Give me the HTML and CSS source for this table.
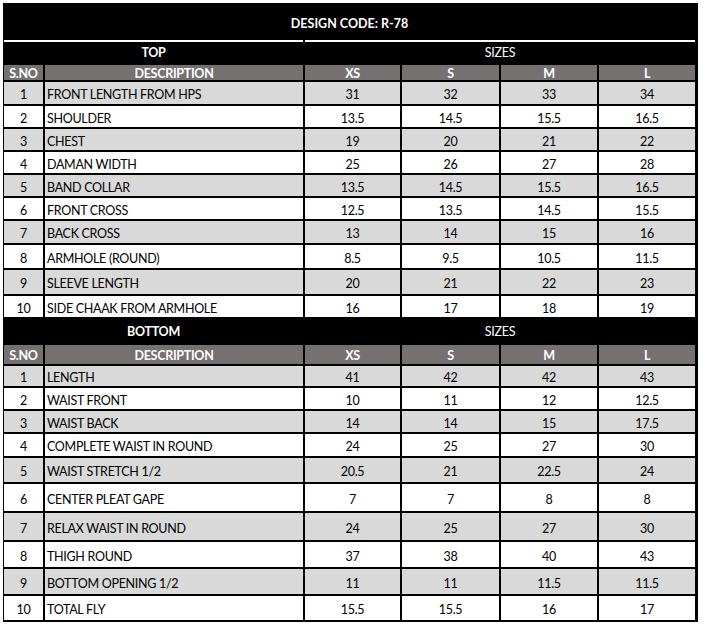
FILE: index.html
```html
<!DOCTYPE html>
<html>
<head>
<meta charset="utf-8">
<link rel="stylesheet" href="styles.css">
</head>
<body>
<div class="sheet">
  <div class="title">DESIGN CODE: R-78</div>

  <div class="row sec top"><div class="name">TOP</div><div class="sizes">SIZES</div></div>
  <div class="row hd h15"><div>S.NO</div><div>DESCRIPTION</div><div>XS</div><div>S</div><div>M</div><div>L</div></div>
  <div class="row g h22"><div>1</div><div class="d">FRONT LENGTH FROM HPS</div><div>31</div><div>32</div><div>33</div><div>34</div></div>
  <div class="row w h21"><div>2</div><div class="d">SHOULDER</div><div>13.5</div><div>14.5</div><div>15.5</div><div>16.5</div></div>
  <div class="row g h21"><div>3</div><div class="d">CHEST</div><div>19</div><div>20</div><div>21</div><div>22</div></div>
  <div class="row w h21"><div>4</div><div class="d">DAMAN WIDTH</div><div>25</div><div>26</div><div>27</div><div>28</div></div>
  <div class="row g h21"><div>5</div><div class="d">BAND COLLAR</div><div>13.5</div><div>14.5</div><div>15.5</div><div>16.5</div></div>
  <div class="row w h21"><div>6</div><div class="d">FRONT CROSS</div><div>12.5</div><div>13.5</div><div>14.5</div><div>15.5</div></div>
  <div class="row g h22"><div>7</div><div class="d">BACK CROSS</div><div>13</div><div>14</div><div>15</div><div>16</div></div>
  <div class="row w h23"><div>8</div><div class="d">ARMHOLE (ROUND)</div><div>8.5</div><div>9.5</div><div>10.5</div><div>11.5</div></div>
  <div class="row g h24"><div>9</div><div class="d">SLEEVE LENGTH</div><div>20</div><div>21</div><div>22</div><div>23</div></div>
  <div class="row w h21"><div>10</div><div class="d">SIDE CHAAK FROM ARMHOLE</div><div>16</div><div>17</div><div>18</div><div>19</div></div>

  <div class="row sec bottom"><div class="name">BOTTOM</div><div class="sizes">SIZES</div></div>
  <div class="row hd h19"><div>S.NO</div><div>DESCRIPTION</div><div>XS</div><div>S</div><div>M</div><div>L</div></div>
  <div class="row g h20"><div>1</div><div class="d">LENGTH</div><div>41</div><div>42</div><div>42</div><div>43</div></div>
  <div class="row w h21"><div>2</div><div class="d">WAIST FRONT</div><div>10</div><div>11</div><div>12</div><div>12.5</div></div>
  <div class="row g h21"><div>3</div><div class="d">WAIST BACK</div><div>14</div><div>14</div><div>15</div><div>17.5</div></div>
  <div class="row w h22"><div>4</div><div class="d">COMPLETE WAIST IN ROUND</div><div>24</div><div>25</div><div>27</div><div>30</div></div>
  <div class="row g h24"><div>5</div><div class="d">WAIST STRETCH 1/2</div><div>20.5</div><div>21</div><div>22.5</div><div>24</div></div>
  <div class="row w h27"><div>6</div><div class="d">CENTER PLEAT GAPE</div><div>7</div><div>7</div><div>8</div><div>8</div></div>
  <div class="row g h27"><div>7</div><div class="d">RELAX WAIST IN ROUND</div><div>24</div><div>25</div><div>27</div><div>30</div></div>
  <div class="row w h25"><div>8</div><div class="d">THIGH ROUND</div><div>37</div><div>38</div><div>40</div><div>43</div></div>
  <div class="row g h25"><div>9</div><div class="d">BOTTOM OPENING 1/2</div><div>11</div><div>11</div><div>11.5</div><div>11.5</div></div>
  <div class="row w h24"><div>10</div><div class="d">TOTAL FLY</div><div>15.5</div><div>15.5</div><div>16</div><div>17</div></div>
</div>
</body>
</html>
```

FILE: styles.css
```css
html, body {
  margin: 0;
  padding: 0;
  background: #ffffff;
}

body {
  padding: 3px 0 0 3px;
  font-family: "Lato", "Liberation Sans", sans-serif;
  font-size: 12.5px;
  letter-spacing: -0.3px;
  color: #000000;
}

.sheet {
  width: 691px;
  background: #000000;
  padding: 0 3px 2px 1px;
  display: flex;
  flex-direction: column;
  gap: 2px;
}

.title {
  height: 35px;
  box-sizing: border-box;
  padding-top: 6px;
  display: flex;
  align-items: center;
  justify-content: center;
  color: #ffffff;
  font-weight: 700;
  font-size: 12.5px;
  letter-spacing: 0;
}

.row {
  display: grid;
  grid-template-columns: 39px 258px 95px 97px 96px 96px;
  column-gap: 2px;
}

.row > div {
  box-sizing: border-box;
  display: flex;
  align-items: center;
  justify-content: center;
  line-height: 1;
  padding-top: 5px;
}

.row > div.d {
  justify-content: flex-start;
  padding-left: 2px;
}

.sec > div {
  background: #000000;
  color: #ffffff;
}

.sec .name {
  grid-column: 1 / span 2;
  font-weight: 700;
}

.sec .sizes {
  grid-column: 3 / span 4;
}

.row.sec.top > div {
  box-sizing: content-box;
  border-top: 2px solid #ffffff;
  height: 19px;
  padding-top: 2px;
}

.row.sec.bottom > div {
  height: 24px;
  padding-top: 2px;
}

.row.hd > div {
  background: #767171;
  color: #ffffff;
  font-weight: 700;
  padding-top: 3px;
}

.g > div { background: #d9d9d9; }
.w > div { background: #ffffff; }

.h15 > div { height: 15px; }
.h19 > div { height: 19px; }
.h20 > div { height: 20px; }
.h21 > div { height: 21px; }
.h22 > div { height: 22px; }
.h23 > div { height: 23px; }
.h24 > div { height: 24px; }
.h25 > div { height: 25px; }
.h27 > div { height: 27px; }
```
